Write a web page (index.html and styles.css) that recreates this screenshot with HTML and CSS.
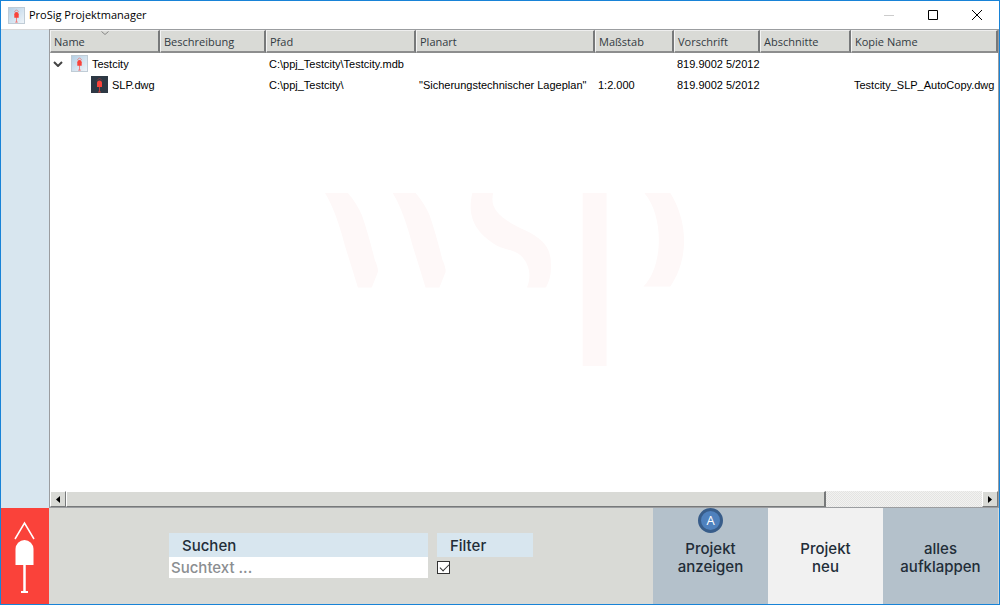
FILE: index.html
```html
<!DOCTYPE html>
<html lang="de">
<head>
<meta charset="utf-8">
<title>ProSig Projektmanager</title>
<link rel="stylesheet" href="styles.css">
</head>
<body>
<svg class="defs" aria-hidden="true">
  <symbol id="signal" viewBox="0 0 17 17">
    <path d="M6 4.500 8.500 2 11 4.500" fill="none" stroke="currentColor" stroke-width="1" opacity=".6"/>
    <path d="M6 11V7a2.500 2.500 0 0 1 5 0v4z" fill="#fa423a"/>
    <path d="M8.500 10v6M7 16h3" stroke="#fa423a" stroke-width="1" opacity=".7"/>
  </symbol>
</svg>
<div class="window">
  <header class="titlebar">
    <svg class="icon icon-light"><use href="#signal"/></svg>
    <h1 class="title">ProSig Projektmanager</h1>
    <div class="controls">
      <button class="control minimize" aria-label="Minimieren" disabled><svg viewBox="0 0 12 12"><path d="M1 6.500h10"/></svg></button>
      <button class="control" aria-label="Maximieren"><svg viewBox="0 0 12 12"><path d="M1.500 1.500h9v9h-9z"/></svg></button>
      <button class="control" aria-label="Schließen"><svg viewBox="0 0 12 12"><path d="m1 1 10 10M11 1 1 11"/></svg></button>
    </div>
  </header>
  <aside class="rail"></aside>
  <main class="list">
    <div class="view">
      <svg class="watermark" viewBox="0 0 362 174" aria-hidden="true">
        <path d="M0 0h23Q31 9 37 22 43 39 50 67q4 9 3 13l-6 15H33Q27 75 20 53 11 18 0 0zM68 0h23q8 9 14 22 6 17 13 45 4 9 3 13l-6 15h-14Q95 75 88 53 79 18 68 0zM148 0h21c-4 17 8 26 31 37 19 9 27 18 27 34q1 13-5 24h-19c5-13 2-24-6-32-7-6-16-6-24-10-20-12-31-27-25-53zM259 0h24v174h-24zM321 0h26c18 29 19 66 0 94h-27c20-20 21-70 1-94z"/>
      </svg>
      <table class="tree">
        <colgroup><col class="c-name"><col class="c-desc"><col class="c-path"><col class="c-plan"><col class="c-scale"><col class="c-rule"><col class="c-part"><col></colgroup>
        <thead>
          <tr>
            <th>Name<svg class="sort" viewBox="0 0 8 4"><path d="m.5.5 3.500 3 3.500-3"/></svg></th>
            <th>Beschreibung</th><th>Pfad</th><th>Planart</th><th>Maßstab</th><th>Vorschrift</th><th>Abschnitte</th><th>Kopie Name</th>
          </tr>
        </thead>
        <tbody>
          <tr>
            <td><div class="node"><button class="expander" aria-label="Zuklappen"><svg viewBox="0 0 10 6"><path d="m1 1 4 4 4-4"/></svg></button><svg class="icon icon-light"><use href="#signal"/></svg>Testcity</div></td>
            <td></td><td>C:\ppj_Testcity\Testcity.mdb</td><td></td><td></td><td>819.9002 5/2012</td><td></td><td></td>
          </tr>
          <tr>
            <td><div class="node child"><svg class="icon icon-dark"><use href="#signal"/></svg>SLP.dwg</div></td>
            <td></td><td>C:\ppj_Testcity\</td><td>"Sicherungstechnischer Lageplan"</td><td>1:2.000</td><td>819.9002 5/2012</td><td></td><td>Testcity_SLP_AutoCopy.dwg</td>
          </tr>
        </tbody>
      </table>
    </div>
    <div class="scrollbar">
      <button class="arrow" aria-label="Nach links"><svg viewBox="0 0 4 7"><path d="M4 0v7L0 3.500z"/></svg></button>
      <div class="track"><div class="thumb"></div></div>
      <button class="arrow" aria-label="Nach rechts"><svg viewBox="0 0 4 7"><path d="M0 0v7l4-3.500z"/></svg></button>
    </div>
  </main>
  <div class="brand">
    <svg viewBox="0 0 48 96" aria-hidden="true">
      <path d="M14 31 23.500 15 33 31" fill="none" stroke="#fff" stroke-width="1.500"/>
      <path d="M14.500 57V41a9 9 0 0 1 18 0v16z" fill="#fff"/>
      <path d="M23.500 56v28" stroke="#fff" stroke-width="2.500"/><path d="M20 84h7" stroke="#fff" stroke-width="2"/>
    </svg>
  </div>
  <footer class="footer">
    <form class="search">
      <div class="field field-text"><label class="caption" for="q">Suchen</label><input class="text" id="q" type="text" placeholder="Suchtext ..."></div>
      <div class="field"><label class="caption" for="f">Filter</label><input class="check" id="f" type="checkbox" checked></div>
    </form>
    <div class="actions">
      <button class="action">Projekt<br>anzeigen<span class="badge">A</span></button>
      <button class="action action-light">Projekt<br>neu</button>
      <button class="action">alles<br>aufklappen</button>
    </div>
  </footer>
</div>
</body>
</html>
```
FILE: styles.css
```css
* { box-sizing: border-box; }
body { margin: 0; font: 11px/20px "Open Sans", "Noto Sans", sans-serif; color: #000; }
button { font: inherit; color: inherit; border: 0; padding: 0; background: none; }
.defs { position: absolute; width: 0; height: 0; }
.window {
  min-height: 100vh;
  display: grid;
  grid-template: auto 1fr auto / 48px 1fr;
  border: 1px solid #1883d7;
  background: #fff;
}
.titlebar { grid-column: 1 / -1; display: flex; align-items: center; gap: 4px; height: 28px; padding-left: 7px; }
.title { margin: 0; font-size: 11px; font-weight: 400; }
.icon { width: 17px; height: 17px; flex: none; }
.icon-light { background: linear-gradient(135deg, #b5d0e6, #eef4f9); border: 1px solid #c0ccd6; color: #fa423a; }
.icon-dark { background: #2d3844; color: #a23c40; }
.controls { display: flex; margin-left: auto; }
.control { width: 44px; height: 26px; display: grid; place-items: center; }
.control svg { width: 12px; height: 12px; fill: none; stroke: #000; }
.minimize svg { stroke: #ccc; }
.rail { background: #d8e6ef; border-top: 1px solid #d8d8d8; }
.list { display: flex; flex-direction: column; min-width: 0; border: 1px solid #9b9da0; }
.view { flex: 1; position: relative; overflow: hidden; }
.watermark { position: absolute; left: 29%; top: 163px; width: 38%; fill: #fef8f8; }
.tree { position: relative; width: 100%; table-layout: fixed; border-collapse: separate; border-spacing: 0; }
.c-name { width: 110px; } .c-desc { width: 106px; } .c-path { width: 150px; } .c-plan { width: 179px; }
.c-scale { width: 79px; } .c-rule { width: 86px; } .c-part { width: 91px; }
.tree th {
  position: relative; height: 23px; padding: 1px 3px 0; text-align: left; font-weight: 400; line-height: 18px;
  color: #333a42; background: #d9dad6; border: solid; border-width: 1px 2px 2px 1px;
  border-color: #eee #77797a #8d8e8e #f4f4f4; white-space: nowrap;
}
.sort { position: absolute; left: 50px; top: 0; width: 8px; height: 4px; fill: none; stroke: #888; }
.tree td { height: 21px; padding: 0 3px; font: 11px/20px "Liberation Sans", sans-serif; white-space: nowrap; }
.node { display: flex; align-items: center; gap: 4px; }
.child { padding-left: 38px; }
.expander { width: 14px; height: 20px; display: grid; place-items: center start; }
.expander svg { width: 10px; height: 6px; fill: none; stroke: #444; stroke-width: 2; }
.scrollbar { display: flex; height: 16px; background: #ebebea; }
.arrow, .thumb { background: #d9dad6; border: 1px solid; border-color: #fff #77797a #77797a #fff; }
.arrow { width: 16px; display: grid; place-items: center; }
.arrow svg { width: 4px; height: 7px; }
.track { flex: 1; display: flex; background: repeating-conic-gradient(#e4e4e2 0 25%, #f2f2f1 0 50%) 0 0 / 2px 2px; }
.thumb { width: 83%; border-right-width: 2px; }
.brand { background: #fa423a; }
.brand svg { display: block; width: 48px; height: 96px; }
.footer { display: flex; justify-content: space-between; background: #d9dad6; font: 500 15px/18px Inter, sans-serif; color: #222d38; }
.search { display: flex; gap: 9px; padding: 25px 0 0 120px; }
.field { width: 96px; }
.field-text { width: 259px; }
.caption { display: block; height: 24px; line-height: 26px; padding-left: 13px; background: #d8e6ef; }
.text { display: block; width: 100%; height: 21px; padding: 0 2px; border: 0; font: inherit; background: #fff; }
.text::placeholder { color: #8b8e91; opacity: 1; }
.check {
  appearance: none; display: block; width: 13px; height: 13px; margin: 4px 0 0; border: 1px solid #333;
  background: #fff; position: relative;
}
.check:checked::after {
  content: ""; position: absolute; left: 4px; top: 0; width: 4px; height: 8px;
  border: solid #333; border-width: 0 1px 1px 0; transform: rotate(45deg);
}
.actions { display: flex; padding-right: 1px; }
.action { position: relative; width: 115px; padding-top: 3px; background: #b4c1cb; }
.action-light { background: #f1f1f1; }
.badge {
  position: absolute; left: 45px; top: 0; width: 25px; height: 25px; border: 3px solid #385d8a; border-radius: 50%;
  background: #4f81bd; color: #fff; font: 13px/19px "Open Sans", sans-serif;
}
```
